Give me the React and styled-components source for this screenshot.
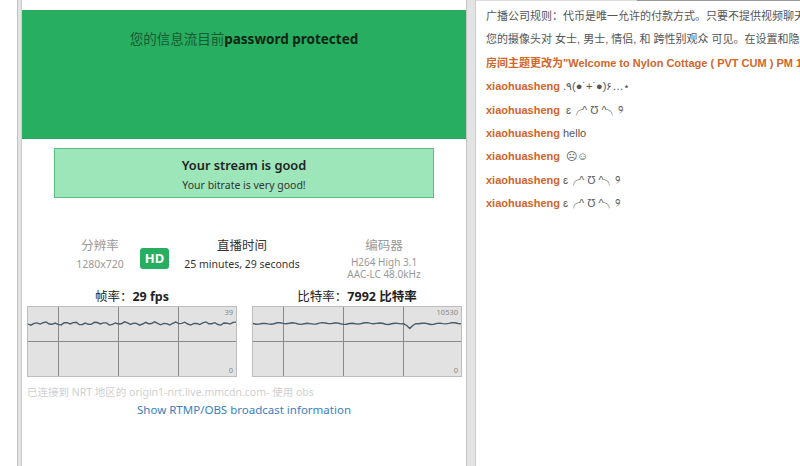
import React from 'react';
import styled, { createGlobalStyle } from 'styled-components';

const GlobalStyle = createGlobalStyle`
  html, body {
    margin: 0;
    padding: 0;
    background: #fff;
    overflow: hidden;
  }
`;

const Page = styled.div`
  display: flex;
  height: 466px;
  width: 800px;
  overflow: hidden;
`;

const Margin = styled.div`
  width: 17px;
  flex: none;
`;

const Gutter = styled.div`
  flex: none;
  width: ${({ $w }) => $w}px;
  box-sizing: border-box;
  background: #e3e3e3;
  border-left: 1px solid #c4c4c4;
  border-right: 1px solid #cdcdcd;
`;

const Panel = styled.div`
  width: 444px;
  flex: none;
  display: flex;
  flex-direction: column;
  font-family: "Noto Sans", "Noto Sans CJK SC", sans-serif;
  color: #333;
`;

const TopClip = styled.div`
  height: 10px;
  overflow: hidden;
  text-align: center;
  font-weight: bold;
  font-size: 15px;
  line-height: 16px;
  color: #111;
  white-space: nowrap;

  span {
    display: block;
    margin-top: -17px;
  }
`;

const Hero = styled.div`
  height: 129px;
  background: #28ae60;
  padding-top: 19px;
  box-sizing: border-box;
  text-align: center;
  font-size: 13.5px;
  line-height: 20px;
  color: #165a31;

  b {
    color: #0b2615;
    font-weight: 700;
  }
`;

const StatusBox = styled.div`
  width: 380px;
  height: 50px;
  margin: 9px auto 0;
  box-sizing: border-box;
  background: #9de6ba;
  border: 1px solid #5dbb84;
  padding-top: 7px;
  text-align: center;
`;

const StatusTitle = styled.div`
  font-size: 12.8px;
  font-weight: 600;
  line-height: 18px;
  color: #222;
`;

const StatusText = styled.div`
  margin-top: 3px;
  font-size: 10.5px;
  line-height: 16px;
  color: #333;
`;

const Stats = styled.div`
  display: grid;
  grid-template-columns: 76px 36px 136px 148px;
  margin-top: 40px;
  padding-left: 40px;
  text-align: center;
`;

const Stat = styled.div`
  display: flex;
  flex-direction: column;
  align-items: center;
`;

const StatLabel = styled.div`
  font-size: 12.5px;
  line-height: 16px;
  color: ${({ $dark }) => ($dark ? '#333' : '#999')};
`;

const StatValue = styled.div`
  margin-top: ${({ $flush }) => ($flush ? 0 : 2)}px;
  font-size: ${({ $tight }) => ($tight ? '10px' : '10.5px')};
  line-height: ${({ $tight }) => ($tight ? '12px' : '16px')};
  color: ${({ $dark }) => ($dark ? '#333' : '#999')};
  white-space: nowrap;
`;

const HdBadge = styled.div`
  margin: 10px 0 0 2px;
  width: 29px;
  height: 21px;
  border-radius: 3px;
  background: #27ae60;
  color: #fff;
  font-weight: 700;
  font-size: 13px;
  line-height: 21px;
  text-align: center;
`;

const Charts = styled.div`
  display: grid;
  grid-template-columns: 210px 210px;
  column-gap: 15px;
  margin-top: 8px;
  padding-left: 5px;
`;

const ChartCol = styled.div`
  display: flex;
  flex-direction: column;
`;

const ChartTitle = styled.div`
  text-align: center;
  font-size: 12.5px;
  line-height: 18px;
  color: #222;

  b {
    font-weight: 700;
  }
`;

const ChartBox = styled.div`
  position: relative;
  height: 71px;
  box-sizing: border-box;
  background: #e2e2e2;
  border: 1px solid #bdbdbd;

  svg {
    display: block;
  }
`;

const ChartMark = styled.span`
  position: absolute;
  right: 3px;
  ${({ $bottom }) => ($bottom ? 'bottom: 1px;' : 'top: 1px;')}
  font-size: 7.5px;
  line-height: 9px;
  color: #888;
`;

const Connected = styled.div`
  margin-top: 8px;
  padding-left: 5px;
  font-size: 10.5px;
  line-height: 14px;
  color: #cfcfcf;
  white-space: nowrap;
`;

const InfoLink = styled.a`
  display: block;
  margin-top: 3px;
  text-align: center;
  font-size: 11.5px;
  line-height: 16px;
  color: #3a7ec1;
  text-decoration: none;
`;

const Chat = styled.div`
  flex: 1;
  min-width: 0;
  overflow: hidden;
  font-family: "Liberation Sans", "Noto Sans CJK SC", sans-serif;
  font-size: 11px;
  color: #555;
`;

const ChatTop = styled.div`
  display: flex;
  height: 1px;

  span:first-child {
    width: 161px;
    background: #dcdcdc;
  }
  span:last-child {
    flex: 1;
    background: #9a9a9a;
  }
`;

const ChatLog = styled.div`
  padding: 4px 0 0 10px;
`;

const Line = styled.div`
  line-height: 23.4px;
  white-space: nowrap;
  overflow: hidden;
  color: ${({ $notice }) => ($notice ? '#d2662a' : '#555')};
  font-weight: ${({ $notice }) => ($notice ? 700 : 400)};
`;

const User = styled.b`
  color: #cf6529;
  font-weight: 700;
  margin-right: 3px;
`;

const W = 208;
const H = 69;

const fpsLine = Array.from({ length: 70 }, (_, i) => {
  const x = (i / 69) * W;
  const y = 16.5 + 1.1 * Math.sin(i * 1.9) + 0.7 * Math.sin(i * 0.7 + 1);
  return `${i ? 'L' : 'M'}${x.toFixed(1)},${y.toFixed(1)}`;
}).join(' ');

const bitrateLine = Array.from({ length: 70 }, (_, i) => {
  const x = (i / 69) * W;
  let y = 16.5 + 0.6 * Math.sin(i * 1.3) + 0.4 * Math.sin(i * 0.45);
  if (i === 52) y = 21.5;
  if (i === 51 || i === 53) y = 18.5;
  return `${i ? 'L' : 'M'}${x.toFixed(1)},${y.toFixed(1)}`;
}).join(' ');

const Chart = ({ path, max }) => (
  <ChartBox>
    <svg width={W} height={H} viewBox={`0 0 ${W} ${H}`}>
      {[30.5, 90.5, 150.5].map((x) => (
        <line key={x} x1={x} y1="0" x2={x} y2={H} stroke="#8a8a8a" strokeWidth="1" />
      ))}
      <line x1="0" y1="34.5" x2={W} y2="34.5" stroke="#8a8a8a" strokeWidth="1" />
      <path d={path} fill="none" stroke="#4a5c68" strokeWidth="1.4" />
    </svg>
    <ChartMark>{max}</ChartMark>
    <ChartMark $bottom>0</ChartMark>
  </ChartBox>
);

const face = 'ɛ╭^ Ʊ ^╮୨';

const App = () => (
  <>
    <GlobalStyle />
    <Page>
      <Margin />
      <Gutter $w={5} />
      <Panel>
        <TopClip>
          <span>Broadcast quality, playback, privacy, settings</span>
        </TopClip>
        <Hero>
          您的信息流目前<b>password protected</b>
        </Hero>
        <StatusBox>
          <StatusTitle>Your stream is good</StatusTitle>
          <StatusText>Your bitrate is very good!</StatusText>
        </StatusBox>
        <Stats>
          <Stat>
            <StatLabel>分辨率</StatLabel>
            <StatValue>1280x720</StatValue>
          </Stat>
          <HdBadge>HD</HdBadge>
          <Stat>
            <StatLabel $dark>直播时间</StatLabel>
            <StatValue $dark>25 minutes, 29 seconds</StatValue>
          </Stat>
          <Stat>
            <StatLabel>编码器</StatLabel>
            <StatValue $tight>H264 High 3.1</StatValue>
            <StatValue $tight $flush>AAC-LC 48.0kHz</StatValue>
          </Stat>
        </Stats>
        <Charts>
          <ChartCol>
            <ChartTitle>帧率：<b>29 fps</b></ChartTitle>
            <Chart path={fpsLine} max="39" />
          </ChartCol>
          <ChartCol>
            <ChartTitle>比特率：<b>7992 比特率</b></ChartTitle>
            <Chart path={bitrateLine} max="10530" />
          </ChartCol>
        </Charts>
        <Connected>已连接到 NRT 地区的 origin1-nrt.live.mmcdn.com- 使用 obs</Connected>
        <InfoLink href="#">Show RTMP/OBS broadcast information</InfoLink>
      </Panel>
      <Gutter $w={10} />
      <Chat>
        <ChatTop>
          <span />
          <span />
        </ChatTop>
        <ChatLog>
          <Line>广播公司规则：代币是唯一允许的付款方式。只要不提供视频聊天，就允许在其他网站上进行推广。</Line>
          <Line>您的摄像头对 女士, 男士, 情侣, 和 跨性别观众 可见。在设置和隐私中更改此设置。</Line>
          <Line $notice>房间主题更改为"Welcome to Nylon Cottage ( PVT CUM ) PM 1 2 3"</Line>
          <Line><User>xiaohuasheng</User>.٩(●˙+˙●)۶…⋆</Line>
          <Line><User>xiaohuasheng</User> {face}</Line>
          <Line><User>xiaohuasheng</User>hello</Line>
          <Line><User>xiaohuasheng</User> ☹☺</Line>
          <Line><User>xiaohuasheng</User>{face}</Line>
          <Line><User>xiaohuasheng</User>{face}</Line>
        </ChatLog>
      </Chat>
    </Page>
  </>
);

export default App;
